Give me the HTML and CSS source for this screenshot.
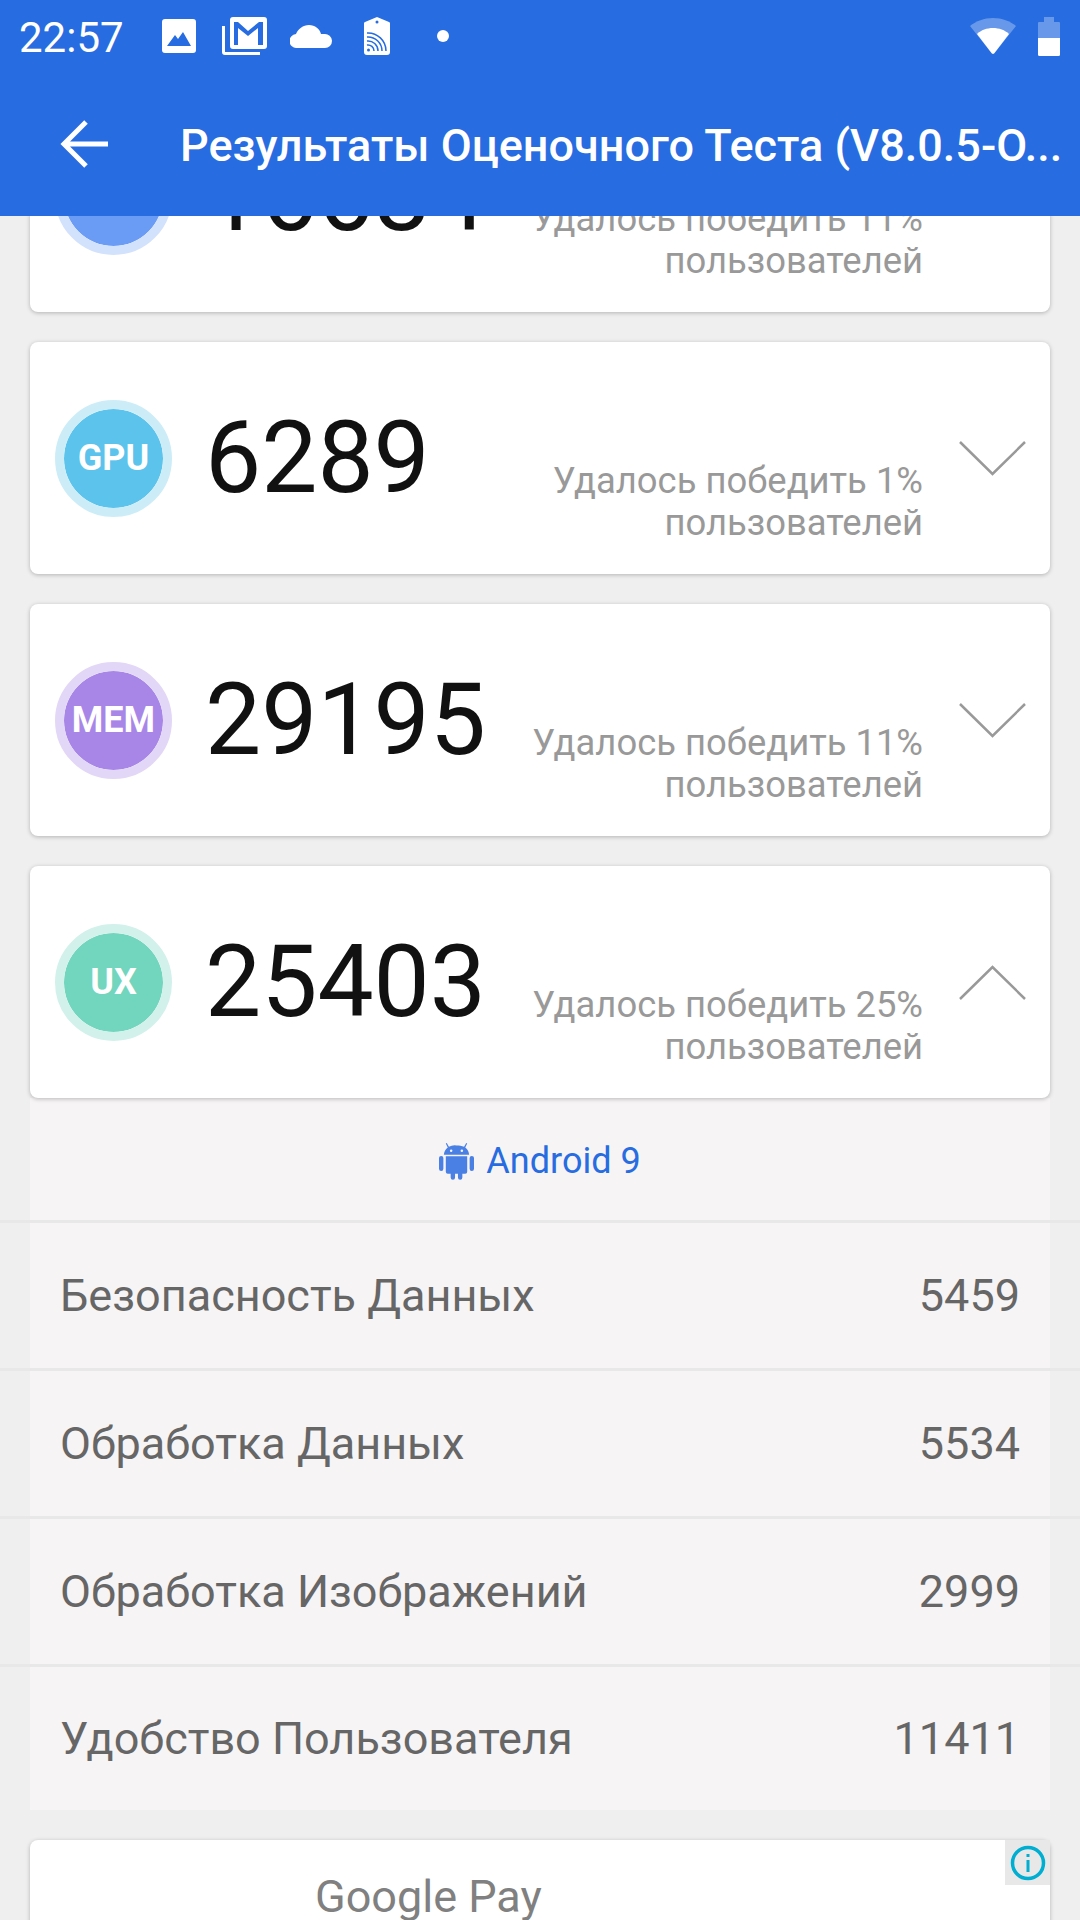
FILE: index.html
```html
<!DOCTYPE html>
<html lang="ru">
<head>
    <meta charset="UTF-8">
    <meta name="viewport" content="width=device-width, initial-scale=1.0">
    <title>Результаты Оценочного Теста</title>
    <link rel="stylesheet" href="styles.css">
</head>
<body>

<header class="appbar">
    <div class="statusbar">
        <span class="clock">22:57</span>
        <svg class="st-image" width="34" height="34" viewBox="0 0 34 34"><path fill="#fff" fill-rule="evenodd" d="M3 0h28a3 3 0 0 1 3 3v28a3 3 0 0 1-3 3H3a3 3 0 0 1-3-3V3a3 3 0 0 1 3-3zM5 27h24L21 13l-5 7-3-4z"/></svg>
        <svg class="st-mail" width="45" height="38" viewBox="0 0 45 38"><path fill="#fff" d="M0 9h3v26h35v3H3a3 3 0 0 1-3-3z"/><path fill="#fff" fill-rule="evenodd" d="M11 0h31a3 3 0 0 1 3 3v26a3 3 0 0 1-3 3H11a3 3 0 0 1-3-3V3a3 3 0 0 1 3-3zm1 5v23h4V11l10 8 10-8v17h5V5h-4L26 14 16 5z"/></svg>
        <svg class="st-cloud" width="42" height="23" viewBox="0 0 42 23"><path fill="#fff" d="M7 23a7 7 0 0 1-1-14C8 4 13 0 19 0c6 0 11 4 12 9h3a7 7 0 0 1 8 7 7 7 0 0 1-7 7z"/></svg>
        <svg class="st-tag" width="26" height="38" viewBox="0 0 26 38"><path fill="#fff" fill-rule="evenodd" d="M13 0l12 5a1.500 1.500 0 0 1 1 1.500V35a3 3 0 0 1-3 3H3a3 3 0 0 1-3-3V6.500A1.500 1.500 0 0 1 1 5zm0 3.500a1.500 1.500 0 1 0 0 3 1.500 1.500 0 0 0 0-3z"/><g fill="none" stroke="#276ce0" stroke-width="1.500"><path d="M3 16a18 18 0 0 1 19 18"/><path d="M3 20a14 14 0 0 1 15 14"/><path d="M3 24a10 10 0 0 1 11 10"/><path d="M3 28a6 6 0 0 1 7 6"/></g><circle cx="4.500" cy="33" r="1.500" fill="#276ce0"/></svg>
        <span class="st-dot"></span>
        <svg class="st-wifi" width="46" height="36" viewBox="0 0 46 36"><path fill="#fff" fill-opacity=".3" d="M23 0C14 0 6 3 0 8l21.500 27a2 2 0 0 0 3 0L46 8C40 3 32 0 23 0z"/><path fill="#fff" d="M23 10c-6 0-12 2-16 6l14.500 19a2 2 0 0 0 3 0L39 16c-4-4-10-6-16-6z"/></svg>
        <svg class="st-battery" width="22" height="39" viewBox="0 0 22 39"><path fill="#fff" fill-opacity=".3" d="M6 0h10v5h5a1 1 0 0 1 1 1v15H0V6a1 1 0 0 1 1-1h5z"/><path fill="#fff" d="M0 21h22v16.500a1.500 1.500 0 0 1-1.500 1.500h-19A1.500 1.500 0 0 1 0 37.500z"/></svg>
    </div>
    <div class="toolbar">
        <svg class="back" width="48" height="48" viewBox="0 0 48 48"><path fill="none" stroke="#fff" stroke-width="5" d="M26 2L4 24l22 22M4 24h44"/></svg>
        <h1>Результаты Оценочного Теста (V8.0.5-O...</h1>
    </div>
</header>

<main class="content">
    <section class="card card-scrolled">
        <div class="badge badge-cpu">CPU</div>
        <div class="score">16684</div>
        <p class="beat">Удалось победить 11% пользователей</p>
        <svg class="chevron" width="67" height="35" viewBox="0 0 67 35"><path d="M1 1l32.500 32L66 1"/></svg>
    </section>
    <section class="card">
        <div class="badge badge-gpu">GPU</div>
        <div class="score">6289</div>
        <p class="beat">Удалось победить 1% пользователей</p>
        <svg class="chevron" width="67" height="35" viewBox="0 0 67 35"><path d="M1 1l32.500 32L66 1"/></svg>
    </section>
    <section class="card">
        <div class="badge badge-mem">MEM</div>
        <div class="score">29195</div>
        <p class="beat">Удалось победить 11% пользователей</p>
        <svg class="chevron" width="67" height="35" viewBox="0 0 67 35"><path d="M1 1l32.500 32L66 1"/></svg>
    </section>
    <section class="card card-open">
        <div class="badge badge-ux">UX</div>
        <div class="score">25403</div>
        <p class="beat">Удалось победить 25% пользователей</p>
        <svg class="chevron" width="67" height="35" viewBox="0 0 67 35"><path d="M1 34L33.500 2 66 34"/></svg>
    </section>

    <div class="details">
        <div class="os-row">
            <svg width="35" height="38" viewBox="0 0 36 38"><path fill="#4a7fe4" d="M9 5l-2-4 1-.6 2.200 4A12 12 0 0 1 18 3c2.800 0 5.300.5 7.800 1.400l2.200-4 1 .6-2 4c2.500 1.700 3.800 4.500 4 7.500H5c.2-3 1.500-5.800 4-7.500zM7 14h22v16a2 2 0 0 1-2 2h-3v4a2 2 0 0 1-4.500 0v-4h-3v4a2 2 0 0 1-4.500 0v-4H9a2 2 0 0 1-2-2zM0 16a2 2 0 0 1 4.500 0v11a2 2 0 0 1-4.500 0zM31.500 16a2 2 0 0 1 4.500 0v11a2 2 0 0 1-4.500 0z"/><circle cx="12.500" cy="8.500" r="1.300" fill="#f6f4f5"/><circle cx="23.500" cy="8.500" r="1.300" fill="#f6f4f5"/></svg>
            <span>Android 9</span>
        </div>
        <div class="row"><div class="row-inner"><span>Безопасность Данных</span><span>5459</span></div></div>
        <div class="row"><div class="row-inner"><span>Обработка Данных</span><span>5534</span></div></div>
        <div class="row"><div class="row-inner"><span>Обработка Изображений</span><span>2999</span></div></div>
        <div class="row"><div class="row-inner"><span>Удобство Пользователя</span><span>11411</span></div></div>
    </div>

    <section class="ad">
        <div class="ad-info">
            <svg width="36" height="36" viewBox="0 0 36 36"><circle cx="18" cy="18" r="15.500" fill="none" stroke="#00aed1" stroke-width="3.500"/><path fill="#00aed1" d="M16.500 15h3v12h-3zM16.500 9h3v3h-3z"/></svg>
        </div>
        <p class="ad-title">Google Pay</p>
    </section>
</main>

</body>
</html>
```

FILE: styles.css
```css
html, body {
    margin: 0;
    padding: 0;
    height: 1920px;
    overflow: hidden;
}
body {
    font-family: 'Roboto', sans-serif;
    background-color: #efefef;
    color: #111;
}
.appbar {
    height: 216px;
    background-color: #276ce0;
    color: #fff;
}
.statusbar {
    display: flex;
    align-items: center;
    height: 72px;
    padding-left: 19px;
}
.clock {
    font-size: 42px;
    width: 143px;
    padding-top: 2px;
}
.statusbar svg {
    flex: none;
}
.st-mail {
    margin-left: 26px;
}
.st-cloud {
    margin-left: 23px;
}
.st-tag {
    margin-left: 32px;
}
.st-dot {
    flex: none;
    width: 12px;
    height: 12px;
    margin-left: 47px;
    border-radius: 50%;
    background-color: #fff;
}
.st-wifi {
    margin-left: 521px;
}
.st-battery {
    margin-left: 22px;
}
.toolbar {
    display: flex;
    align-items: center;
    height: 144px;
    padding-left: 60px;
}
.back {
    flex: none;
}
.toolbar h1 {
    margin: 2px 0 0 72px;
    font-size: 45px;
    font-weight: 500;
    white-space: nowrap;
}

/* page is scrolled, first card runs up under the app bar */
.content {
    height: 1704px;
    overflow: hidden;
}
.card {
    position: relative;
    display: flex;
    align-items: center;
    box-sizing: border-box;
    height: 232px;
    margin: 0 30px 30px;
    padding: 0 24px 0 25px;
    background-color: #fff;
    border-radius: 8px;
    box-shadow: 0 1px 4px rgba(0, 0, 0, 0.25);
}
.card-scrolled {
    margin-top: -136px;
}
.card-open {
    z-index: 1;
    margin-bottom: 0;
}
.badge {
    flex: none;
    box-sizing: border-box;
    width: 117px;
    height: 117px;
    border: 9px solid;
    border-radius: 50%;
    background-clip: padding-box;
    color: #fff;
    font-size: 36px;
    font-weight: 700;
    line-height: 99px;
    text-align: center;
}
.badge-cpu {
    background-color: #6a9cf5;
    border-color: #d2e1fc;
}
.badge-gpu {
    background-color: #5bc3ec;
    border-color: #ccedf8;
}
.badge-mem {
    background-color: #a886e8;
    border-color: #e2d7f6;
}
.badge-ux {
    background-color: #72d5bd;
    border-color: #d2f1ea;
}
.score {
    flex: none;
    margin-left: 33px;
    font-size: 100px;
    line-height: 100px;
    color: #111;
}
.beat {
    position: absolute;
    right: 127px;
    bottom: 30px;
    width: 400px;
    margin: 0;
    color: #999;
    font-size: 36.400px;
    line-height: 42px;
    text-align: right;
}
.chevron {
    flex: none;
    margin-left: auto;
}
.chevron path {
    fill: none;
    stroke: #999;
    stroke-width: 2.500;
}

.details {
    color: #666;
    font-size: 45px;
}
.os-row {
    display: flex;
    align-items: center;
    justify-content: center;
    gap: 12px;
    height: 122px;
    margin: 0 30px;
    padding-top: 3px;
    box-sizing: border-box;
    background-color: #f6f4f5;
    color: #276ce0;
    font-size: 36px;
}
.row {
    border-top: 3px solid #e8e8e8;
}
.row-inner {
    display: flex;
    justify-content: space-between;
    align-items: center;
    height: 145px;
    margin: 0 30px;
    padding: 0 30px;
    background-color: #f6f4f5;
}
.row:last-child .row-inner {
    height: 143px;
}

.ad {
    position: relative;
    height: 120px;
    margin: 30px 30px 0;
    background-color: #fff;
    border-radius: 8px;
    box-shadow: 0 1px 4px rgba(0, 0, 0, 0.25);
}
.ad-info {
    position: absolute;
    top: 0;
    right: 0;
    display: flex;
    align-items: center;
    justify-content: center;
    width: 45px;
    height: 45px;
    background-color: #e8e8e8;
}
.ad-title {
    margin: 0;
    padding: 32px 0 0 285px;
    color: #808080;
    font-size: 45px;
    line-height: 50px;
}
```
